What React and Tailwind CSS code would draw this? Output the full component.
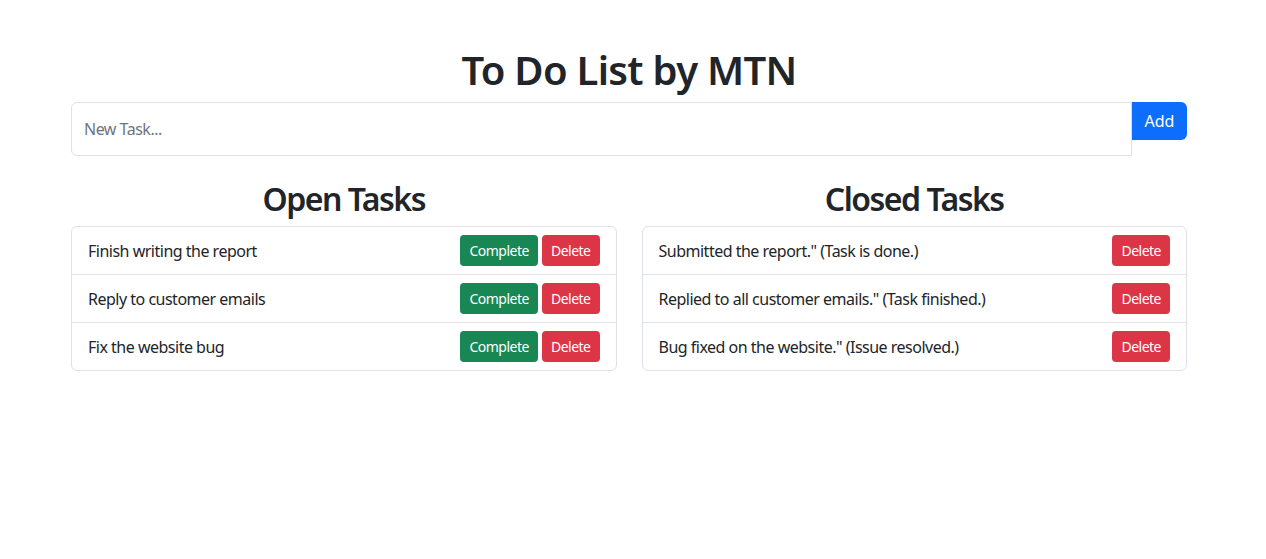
import React from "react";

const open = ["Finish writing the report", "Reply to customer emails", "Fix the website bug"];
const closed = [
  'Submitted the report." (Task is done.)',
  'Replied to all customer emails." (Task finished.)',
  'Bug fixed on the website." (Issue resolved.)',
];

function Btn({ color, children }) {
  return (
    <button className={`${color} text-white text-[14px] leading-[21px] tracking-[-0.5px] px-2 py-[4px] rounded-[4px] border border-transparent`}>
      {children}
    </button>
  );
}

function Column({ title, items, showComplete }) {
  return (
    <div className="flex flex-col">
      <h2 className="text-center text-[32px] leading-[38px] font-semibold tracking-[-1.5px] mb-2">{title}</h2>
      <ul className="border border-[#dee2e6] rounded-[6px]">
        {items.map((t, i) => (
          <li
            key={i}
            className={`flex items-center justify-between px-4 ${i > 0 ? "border-t border-[#dee2e6] h-[48px]" : "h-[47px]"}`}
          >
            <span className="text-[16px] leading-6 tracking-[-0.5px]">{t}</span>
            <div className="flex gap-1">
              {showComplete && <Btn color="bg-[#198754]">Complete</Btn>}
              <Btn color="bg-[#dc3545]">Delete</Btn>
            </div>
          </li>
        ))}
      </ul>
    </div>
  );
}

export default function App() {
  return (
    <div className="min-h-[559px] bg-white text-[#212529]" style={{ fontFamily: '"Noto Sans", "Open Sans", sans-serif' }}>
      <div className="w-[1116px] ml-[71px] pt-[46px]">
        <h1 className="text-center text-[40px] leading-[48px] font-semibold tracking-[-0.7px] mb-2">To Do List by MTN</h1>
        <div className="flex items-start">
          <input
            placeholder="New Task..."
            className="flex-1 h-[54px] border border-[#dee2e6] rounded-l-[6px] px-3 text-[16px] tracking-[-0.5px] placeholder:text-[#6c757d] outline-none"
          />
          <button className="bg-[#0d6efd] text-white text-[16px] h-[38px] w-[55px] rounded-r-[6px]">Add</button>
        </div>
        <div className="grid grid-cols-2 gap-[25px] mt-[24px]">
          <Column title="Open Tasks" items={open} showComplete />
          <Column title="Closed Tasks" items={closed} />
        </div>
      </div>
    </div>
  );
}
